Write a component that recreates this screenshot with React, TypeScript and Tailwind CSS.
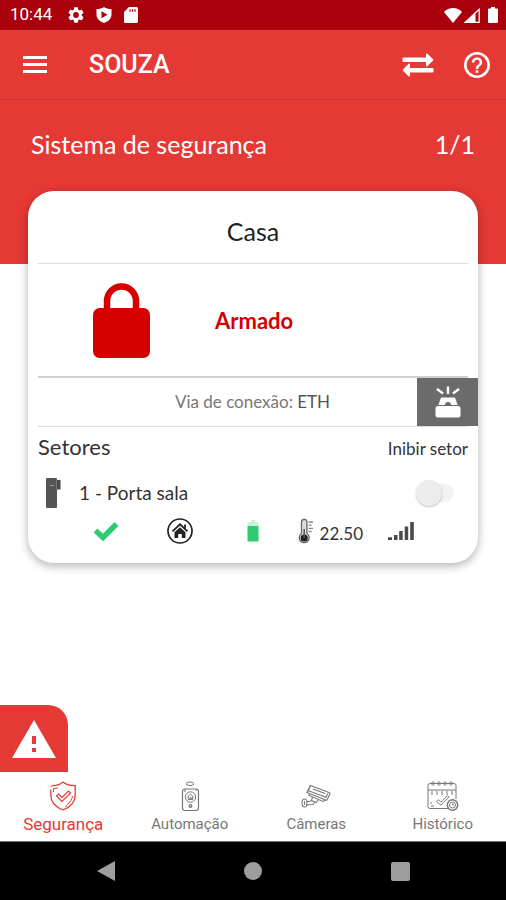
import React, { useState } from 'react';

type IconProps = { className?: string };

const GearIcon: React.FC<IconProps> = ({ className }) => (
  <svg viewBox="2 2 20 20" fill="currentColor" className={className} aria-hidden="true">
    <path d="M19.14 12.94c.04-.3.06-.61.06-.94 0-.32-.02-.64-.07-.94l2.03-1.58a.49.49 0 0 0 .12-.61l-1.92-3.32a.49.49 0 0 0-.59-.22l-2.39.96c-.5-.38-1.03-.7-1.62-.94l-.36-2.54a.48.48 0 0 0-.48-.41h-3.84c-.24 0-.43.17-.47.41l-.36 2.54c-.59.24-1.13.57-1.62.94l-2.39-.96a.48.48 0 0 0-.59.22L2.74 8.87c-.12.21-.08.47.12.61l2.03 1.58c-.05.3-.09.63-.09.94s.02.64.07.94l-2.03 1.58a.49.49 0 0 0-.12.61l1.92 3.32c.12.22.37.29.59.22l2.39-.96c.5.38 1.03.7 1.62.94l.36 2.54c.05.24.24.41.48.41h3.84c.24 0 .44-.17.47-.41l.36-2.54c.59-.24 1.13-.56 1.62-.94l2.39.96c.22.08.47 0 .59-.22l1.92-3.32c.12-.22.07-.47-.12-.61l-2.01-1.58zM12 15.6A3.6 3.6 0 1 1 12 8.4a3.6 3.6 0 0 1 0 7.2z" />
  </svg>
);

const PlayShieldIcon: React.FC<IconProps> = ({ className }) => (
  <svg viewBox="0 0 16 16" className={className} aria-hidden="true">
    <path fill="currentColor" d="M8 0c2 1.500 4.500 2 7.500 2v5.500c0 4-3 7-7.500 8.500C3.500 14.500.5 11.500.5 7.500V2C3.500 2 6 1.500 8 0z" />
    <path fill="#a9000c" d="M5.500 4.200 11.500 7.700 5.500 11.200z" />
  </svg>
);

const SdCardIcon: React.FC<IconProps> = ({ className }) => (
  <svg viewBox="0 0 14 16" className={className} aria-hidden="true">
    <path fill="currentColor" d="M5 0h7.500A1.500 1.500 0 0 1 14 1.500v13a1.500 1.500 0 0 1-1.500 1.500h-11A1.500 1.500 0 0 1 0 14.500V5z" />
    <path stroke="#a9000c" strokeWidth="1.200" d="M6 2.200v2.600M8.500 2.200v2.600M11 2.200v2.600" />
  </svg>
);

const WifiIcon: React.FC<IconProps> = ({ className }) => (
  <svg viewBox="0 0 18 15" fill="currentColor" className={className} aria-hidden="true">
    <path d="M9 15 0 4C2.500 1.500 5.500 0 9 0s6.500 1.500 9 4z" />
  </svg>
);

const CellIcon: React.FC<IconProps> = ({ className }) => (
  <svg viewBox="0 0 16 15" className={className} aria-hidden="true">
    <path fill="currentColor" d="M0 15 11.500 4v11z" />
    <path fill="none" stroke="currentColor" strokeWidth="1.300" d="M1.500 14.300 15.200 1.300v13z" />
  </svg>
);

const StatusBatteryIcon: React.FC<IconProps> = ({ className }) => (
  <svg viewBox="0 0 10 16" fill="currentColor" className={className} aria-hidden="true">
    <path d="M3 0h4v1.500h2a1 1 0 0 1 1 1V15a1 1 0 0 1-1 1H1a1 1 0 0 1-1-1V2.500a1 1 0 0 1 1-1h2z" />
  </svg>
);

const SwapIcon: React.FC<IconProps> = ({ className }) => (
  <svg viewBox="0 0 32 24" fill="currentColor" className={className} aria-hidden="true">
    <path d="M1.500 4.500H24V1.300c0-.8.9-1.200 1.500-.6l5.600 5.500c.4.400.4 1 0 1.400l-5.600 5.500c-.6.600-1.500.2-1.500-.6V9H1.500A1 1 0 0 1 .5 8V5.500a1 1 0 0 1 1-1z" />
    <path d="M30.500 19.500H8v3.200c0 .8-.9 1.200-1.500.6L.9 17.800a1 1 0 0 1 0-1.400l5.600-5.500c.6-.6 1.500-.2 1.500.6V15h22.500a1 1 0 0 1 1 1v2.500a1 1 0 0 1-1 1z" />
  </svg>
);

const HelpIcon: React.FC<IconProps> = ({ className }) => (
  <svg viewBox="2 2 20 20" fill="currentColor" className={className} aria-hidden="true">
    <path d="M11 18h2v-2h-2v2zm1-16a10 10 0 1 0 0 20 10 10 0 0 0 0-20zm0 18a8 8 0 1 1 0-16 8 8 0 0 1 0 16zm0-14a4 4 0 0 0-4 4h2a2 2 0 1 1 4 0c0 2-3 1.750-3 5h2c0-2.250 3-2.500 3-5a4 4 0 0 0-4-4z" />
  </svg>
);

const LockIcon: React.FC<IconProps> = ({ className }) => (
  <svg viewBox="0 0 57 75" className={className} aria-hidden="true">
    <path fill="none" stroke="currentColor" strokeWidth="6.500" d="M14 28V18a14.500 14.500 0 0 1 29 0v10" />
    <rect y="25" width="57" height="50" rx="6.500" fill="currentColor" />
  </svg>
);

const SirenIcon: React.FC<IconProps> = ({ className }) => (
  <svg viewBox="0 0 26 32" className={className} aria-hidden="true">
    <path stroke="currentColor" strokeWidth="2.400" d="M13 .5v7.500M2 3l6 4.500M24 3l-6 4.500" />
    <path fill="currentColor" d="M7 11.500h12c.8 0 1.300.4 1.500 1.200L22.500 19h-19l2-6.300c.2-.8.700-1.200 1.500-1.200z" />
    <path fill="#6b6b6b" d="M10 19a3 3 0 0 1 6 0z" />
    <rect x=".5" y="20" width="25" height="11.500" rx="2.500" fill="currentColor" />
  </svg>
);

const SensorIcon: React.FC<IconProps> = ({ className }) => (
  <svg viewBox="0 0 15 30" className={className} aria-hidden="true">
    <rect width="11" height="30" rx="1" fill="#555" />
    <path fill="#4a4a4a" d="M10 2h4.500v9.500H10z" />
    <path stroke="#999" d="M4 7.500h4" />
    <path stroke="#777" d="M10.500 2v9.500" />
  </svg>
);

const CheckIcon: React.FC<IconProps> = ({ className }) => (
  <svg viewBox="0 0 26 20" className={className} aria-hidden="true">
    <path fill="none" stroke="#2ecc71" strokeWidth="5.500" d="m2.500 9.500 7.500 7L23.500 3" />
  </svg>
);

const HomeIcon: React.FC<IconProps> = ({ className }) => (
  <svg viewBox="0 0 26 26" className={className} aria-hidden="true">
    <circle cx="13" cy="13" r="12" fill="none" stroke="#222" strokeWidth="1.700" />
    <path fill="none" stroke="#222" strokeWidth="1.800" d="m5.500 13.300 7.500-7 7.500 7M18 6.500v4" />
    <path fill="#222" d="m13 9.300 5.500 5V20h-3.700v-4h-3.600v4H7.500v-5.700z" />
  </svg>
);

const BatteryIcon: React.FC<IconProps> = ({ className }) => (
  <svg viewBox="0 0 12 22" className={className} aria-hidden="true">
    <path fill="#c6f3d8" d="M4 0h4v2h2.500c.6 0 1 .4 1 1v3H.5V3c0-.6.4-1 1-1H4z" />
    <path fill="#2ecc71" d="M.5 6h11v14.500c0 .6-.4 1-1 1h-9c-.6 0-1-.4-1-1z" />
  </svg>
);

const ThermometerIcon: React.FC<IconProps> = ({ className }) => (
  <svg viewBox="0 0 16 26" className={className} aria-hidden="true">
    <path fill="#ddd" stroke="#666" strokeWidth="1.300" d="M3.500 15.500V4a2.700 2.700 0 0 1 5.400 0v11.500a5 5 0 1 1-5.400 0z" />
    <circle cx="6.200" cy="20" r="3.600" fill="#222" />
    <path stroke="#555" strokeWidth="1.500" d="M6.200 20v-9" />
    <path stroke="#888" strokeWidth="1.300" d="M10.500 4H15M10.500 7.200h3M10.500 10.300H15M10.500 13.500h3" />
  </svg>
);

const SignalIcon: React.FC<IconProps> = ({ className }) => (
  <svg viewBox="0 0 26 18" fill="#4a4a4a" className={className} aria-hidden="true">
    <path d="M0 15.300h4V18H0zM6 13h3.500v5H6zM11.200 9h3.500v9h-3.500zM16.700 4.500h3.500V18h-3.500zM22.200 0h3.600v18h-3.600z" />
  </svg>
);

const AlertIcon: React.FC<IconProps> = ({ className }) => (
  <svg viewBox="0 0 44 38" className={className} aria-hidden="true">
    <path fill="currentColor" d="M22 0 44 38H0z" />
    <path fill="#e53935" d="M20 16h4v8h-4zM20 28h4v4h-4z" />
  </svg>
);

const ShieldTabIcon: React.FC<IconProps> = ({ className }) => (
  <svg viewBox="0 0 30 30" fill="none" stroke="currentColor" className={className} aria-hidden="true">
    <path strokeWidth="1.300" d="M15 1c3 2.500 7 3.700 12.200 3.700V14c0 7-4.500 12-12.200 15C7.300 26 2.800 21 2.800 14V8.500M5 4.700c4-.2 7.500-1.400 10-3.700" />
    <path d="M5.500 11V7.500c1.500 0 3-.2 4.500-.7M2.500 5.500l3-1M24.500 15c-.5 3-1.800 5.500-4 7.500M18.500 24l3-2.500M17 26l2-1.200" />
    <path strokeWidth="1.200" d="m8.500 15 2-2 3.500 3.500 6.500-6.500 2 2-8.500 8.500z" />
  </svg>
);

const RemoteTabIcon: React.FC<IconProps> = ({ className }) => (
  <svg viewBox="0 0 30 30" fill="none" stroke="currentColor" className={className} aria-hidden="true">
    <path d="M11 2.500c2.500-2 5.500-2 8 0M11 3c2.500 2 5.500 2 8 0" />
    <rect x="7.500" y="8" width="16" height="21.500" rx="2.500" strokeWidth="1.200" />
    <circle cx="15.500" cy="16" r="5.200" />
    <path d="M13.300 15.500v3h4.400v-3M12.500 16l3-2.700 3 2.700M15 18.500v-2h1.200v2" />
    <circle cx="15.500" cy="25" r="1.300" strokeWidth="1.300" />
    <path d="M10 8v3M21 8v2" />
  </svg>
);

const CameraTabIcon: React.FC<IconProps> = ({ className }) => (
  <svg viewBox="0 0 30 30" fill="none" stroke="currentColor" strokeWidth="1.100" className={className} aria-hidden="true">
    <path d="M9.500 4.500 28 11.500c1 .4 1.200 1 .8 1.800l-2.500 5.200c-.4.700-1 .9-1.800.6L6 11.500z" />
    <path d="m7 9.500 18.500 7M9.500 4.500 6 11.500M12 8l12 4.500M24.500 19l-2.500 1.500-14-6 .5-2M27 12.500l-2.500 4.500" />
    <path d="m11.500 16-1 3.500 4.500 2 2.500-3M10.500 19.500l-2 1H5.500M14 21l-2 2.500-6.500.5" />
    <ellipse cx="3.500" cy="22" rx="2.500" ry="4" />
    <path d="M3.500 20v4" />
  </svg>
);

const HistoryTabIcon: React.FC<IconProps> = ({ className }) => (
  <svg viewBox="0 0 32 30" fill="none" stroke="currentColor" className={className} aria-hidden="true">
    <path d="M21 27.500H3a2 2 0 0 1-2-2v-21a2 2 0 0 1 2-2h24a2 2 0 0 1 2 2V18M1 9h28" />
    <path d="m4 2.500 2-2 2 2-2 2zM10 2.500l2-2 2 2-2 2zM16 2.500l2-2 2 2-2 2zM22 2.500l2-2 2 2-2 2z" />
    <path d="M5 10v4M10 10v4M15 10v4M20 10v4M25 10v4M4 21v2M4 25h3" />
    <path d="m9.500 20.500 2-1.800 2.500 2.500 6.500-6.500 1.500 1.500-8 8z" />
    <circle cx="25.500" cy="24" r="5.200" strokeWidth="1.500" />
    <circle cx="25.500" cy="24" r="3" />
    <path d="M25.500 22.500V24H27" />
  </svg>
);

const tabs = [
  { label: 'Segurança', Icon: ShieldTabIcon },
  { label: 'Automação', Icon: RemoteTabIcon },
  { label: 'Câmeras', Icon: CameraTabIcon },
  { label: 'Histórico', Icon: HistoryTabIcon },
];

const App: React.FC = () => {
  const [activeTab, setActiveTab] = useState('Segurança');
  const [inhibited, setInhibited] = useState(false);

  return (
    <div className="flex min-h-screen flex-col bg-white font-['Lato',sans-serif] text-[#333]">
      {/* Status bar */}
      <div className="flex h-[30px] items-center justify-between bg-[#a9000c] pr-2 pl-2.5 text-white">
        <div className="flex items-center gap-3">
          <span className="mr-1 font-['Roboto',sans-serif] text-[17px]">10:44</span>
          <GearIcon className="h-4 w-4" />
          <PlayShieldIcon className="h-4 w-4" />
          <SdCardIcon className="h-4 w-3.5" />
        </div>
        <div className="flex items-center">
          <WifiIcon className="mr-0.5 h-[15px] w-[18px]" />
          <CellIcon className="mr-2 h-[15px] w-4" />
          <StatusBatteryIcon className="h-4 w-2.5" />
        </div>
      </div>

      {/* App bar */}
      <header className="flex h-[70px] items-center border-b border-[#cf3030] bg-[#e53935] pr-4 pl-[23px] text-white">
        <button type="button" aria-label="Menu" className="flex w-6 flex-col gap-1">
          <span className="h-[3px] w-full bg-white" />
          <span className="h-[3px] w-full bg-white" />
          <span className="h-[3px] w-full bg-white" />
        </button>
        <h1 className="ml-[42px] flex-1 font-['Roboto',sans-serif] text-[25px] font-medium">SOUZA</h1>
        <button type="button" aria-label="Trocar sistema" className="mr-[30px]">
          <SwapIcon className="h-6 w-8" />
        </button>
        <button type="button" aria-label="Ajuda">
          <HelpIcon className="h-[26px] w-[26px]" />
        </button>
      </header>

      <main className="flex flex-1 flex-col">
        <div className="flex items-center justify-between bg-[#e53935] px-[31px] pt-[26px] pb-[102px] text-[25px] leading-9 text-white">
          <h2>Sistema de segurança</h2>
          <span>1/1</span>
        </div>

        {/* System card */}
        <section className="mx-7 -mt-[73px] rounded-[26px] bg-white pb-3 shadow-[0_3px_10px_rgba(0,0,0,0.3)]">
          <h3 className="mx-2.5 border-b border-[#dedede] pt-[22px] pb-3.5 text-center text-[25px] leading-9 text-[#222]">
            Casa
          </h3>

          <div className="mx-2.5 flex h-[114px] items-center border-b-2 border-[#cfcfcf] pl-[55px] text-[#d50000]">
            <LockIcon className="h-[75px] w-[57px]" />
            <p className="ml-[65px] text-[22px] font-bold">Armado</p>
          </div>

          <div className="flex h-12 items-stretch">
            <p className="ml-2.5 flex flex-1 items-center justify-center pl-[50px] text-[17px] text-[#777]">
              Via de conexão:&nbsp;<span className="text-[#555]">ETH</span>
            </p>
            <button type="button" aria-label="Sirene" className="flex w-[61px] items-center justify-center bg-[#6b6b6b] text-white">
              <SirenIcon className="h-8 w-[26px]" />
            </button>
          </div>

          <div className="mx-2.5 flex items-end justify-between border-t border-[#dedede] pt-1">
            <h4 className="text-[22px] leading-8">Setores</h4>
            <span className="text-[17px] leading-7">Inibir setor</span>
          </div>

          <div className="mt-3 mr-6 ml-[18px] flex h-9 items-center">
            <SensorIcon className="h-[30px] w-[15px]" />
            <label htmlFor="sector-1" className="ml-[18px] flex-1 text-[19px]">1 - Porta sala</label>
            <div className="relative h-[18px] w-[38px]">
              <input
                id="sector-1"
                type="checkbox"
                role="switch"
                checked={inhibited}
                onChange={() => setInhibited(!inhibited)}
                className="peer block h-full w-full appearance-none rounded-full bg-[#f2f2f2]"
              />
              <span className="pointer-events-none absolute -top-1 left-0 h-[26px] w-[26px] rounded-full bg-[#ececec] shadow-[0_1px_2px_rgba(0,0,0,0.25)] peer-checked:left-3" />
            </div>
          </div>

          <div className="mr-10 ml-[41px] grid h-10 grid-cols-5 place-items-center">
            <CheckIcon className="h-5 w-[26px]" />
            <HomeIcon className="h-[26px] w-[26px]" />
            <BatteryIcon className="h-[22px] w-3" />
            <div className="flex items-end gap-1.5 pl-1.5">
              <ThermometerIcon className="h-[26px] w-4" />
              <span className="text-[17px] leading-5">22.50</span>
            </div>
            <SignalIcon className="h-[18px] w-[26px]" />
          </div>
        </section>

        <button
          type="button"
          aria-label="Alertas"
          className="mt-auto flex h-[67px] w-[68px] items-center justify-center rounded-tr-[20px] bg-[#e53935] text-white"
        >
          <AlertIcon className="h-[38px] w-11" />
        </button>
      </main>

      {/* Bottom tabs */}
      <nav className="grid h-[70px] grid-cols-4 border-b border-[#777] bg-white font-['Roboto',sans-serif]">
        {tabs.map(({ label, Icon }) => (
          <button
            key={label}
            type="button"
            onClick={() => setActiveTab(label)}
            className={
              activeTab === label
                ? 'flex flex-col items-center pt-[9px] text-[17px] text-[#e53935]'
                : 'flex flex-col items-center pt-[9px] text-[15px] text-[#777]'
            }
          >
            <Icon className="h-[30px] w-8" />
            <span className="leading-[26px]">{label}</span>
          </button>
        ))}
      </nav>

      {/* System navigation */}
      <div className="grid h-[58px] grid-cols-3 place-items-center bg-black px-8 text-[#9e9e9e]">
        <button type="button" aria-label="Voltar">
          <svg viewBox="0 0 18 20" fill="currentColor" className="h-5 w-[18px]">
            <path d="M18 0v20L0 10z" />
          </svg>
        </button>
        <button type="button" aria-label="Início" className="h-[18px] w-[18px] rounded-full bg-[#9e9e9e]" />
        <button type="button" aria-label="Recentes" className="h-[19px] w-[19px] rounded-xs bg-[#9e9e9e]" />
      </div>
    </div>
  );
};

export default App;
